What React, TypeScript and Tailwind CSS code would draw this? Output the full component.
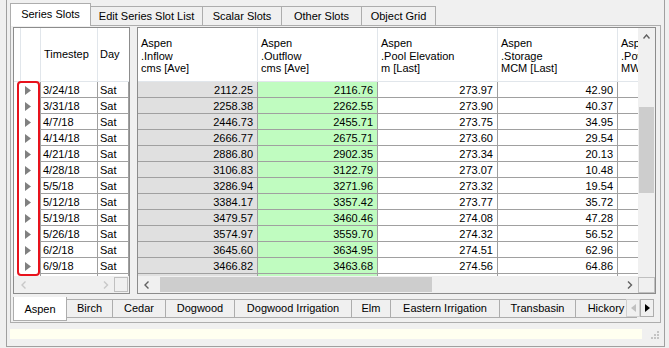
import React from "react";

const rows = [
  ["3/24/18", "2112.25", "2116.76", "273.97", "42.90"],
  ["3/31/18", "2258.38", "2262.55", "273.90", "40.37"],
  ["4/7/18", "2446.73", "2455.71", "273.75", "34.95"],
  ["4/14/18", "2666.77", "2675.71", "273.60", "29.54"],
  ["4/21/18", "2886.80", "2902.35", "273.34", "20.13"],
  ["4/28/18", "3106.83", "3122.79", "273.07", "10.48"],
  ["5/5/18", "3286.94", "3271.96", "273.32", "19.54"],
  ["5/12/18", "3384.17", "3357.42", "273.77", "35.72"],
  ["5/19/18", "3479.57", "3460.46", "274.08", "47.28"],
  ["5/26/18", "3574.97", "3559.70", "274.32", "56.52"],
  ["6/2/18", "3645.60", "3634.95", "274.51", "62.96"],
  ["6/9/18", "3466.82", "3463.68", "274.56", "64.86"],
  ["6/16/18", "3401.12", "3399.05", "274.60", "66.10"],
];

const headers = [
  [".Inflow", "cms [Ave]"],
  [".Outflow", "cms [Ave]"],
  [".Pool Elevation", "m [Last]"],
  [".Storage", "MCM [Last]"],
  [".Power", "MW [Ave]"],
];

const topTabs = [
  { label: "Series Slots", w: "w-[81px]" },
  { label: "Edit Series Slot List", w: "w-[112px]" },
  { label: "Scalar Slots", w: "w-[79px]" },
  { label: "Other Slots", w: "w-[80px]" },
  { label: "Object Grid", w: "w-[74px]" },
];

const bottomTabs = [
  { label: "Birch", w: "w-[46px]" },
  { label: "Cedar", w: "w-[53px]" },
  { label: "Dogwood", w: "w-[69px]" },
  { label: "Dogwood Irrigation", w: "w-[117px]" },
  { label: "Elm", w: "w-[39px]" },
  { label: "Eastern Irrigation", w: "w-[109px]" },
  { label: "Transbasin", w: "w-[76px]" },
  { label: "Hickory", w: "w-[61px]" },
];

function Chevron({ dir, color }: { dir: "left" | "right" | "up"; color: string }) {
  const d =
    dir === "left"
      ? "M4.5 0.5 L1 4 L4.5 7.5"
      : dir === "right"
      ? "M1 0.5 L4.5 4 L1 7.5"
      : "M0.5 4.5 L3.5 1 L6.5 4.5";
  return (
    <svg width={dir === "up" ? 7 : 6} height={dir === "up" ? 6 : 8} viewBox={dir === "up" ? "0 0 7 6" : "0 0 6 8"}>
      <path d={d} fill="none" stroke={color} strokeWidth="1.4" />
    </svg>
  );
}

export default function App() {
  return (
    <div className="relative h-[348px] w-[669px] overflow-hidden bg-[#f0f0f0] font-['Liberation_Sans',Arial,sans-serif] text-[11px] leading-[13px] text-black">
      <div className="ml-[6px] h-[347px] w-[659px] border-x border-b border-[#a0a0a0] pl-[3px] pt-[3px]">
        {/* top tabs */}
        <div className="flex h-[22px] items-end">
          {topTabs.map((tab, i) =>
            i === 0 ? (
              <div
                key={tab.label}
                className={`${tab.w} relative z-10 -mb-px flex h-[23px] items-center justify-center border-x border-t border-[#adadad] bg-white pb-[2px]`}
              >
                {tab.label}
              </div>
            ) : (
              <div
                key={tab.label}
                className={`${tab.w} flex h-[19px] items-center justify-center border-t border-r border-[#adadad] bg-[#f0f0f0]`}
              >
                {tab.label}
              </div>
            )
          )}
        </div>

        {/* tab page */}
        <div className="h-[298px] w-[651px] border border-[#adadad] bg-[#f0f0f0] pl-[2px] pt-[1px]">
          <div className="flex h-[267px]">
            {/* frozen left grid */}
            <div className="flex w-[117px] flex-col border border-[#8c8c8c] bg-white">
              <div className="flex h-[54px] border-b border-[#e1e6eb]">
                <div className="w-[7px] border-r border-[#e1e6eb]" />
                <div className="w-[20px] border-r border-[#e1e6eb]" />
                <div className="flex w-[57px] items-center border-r border-[#e1e6eb] pl-[3px]">Timestep</div>
                <div className="flex w-[31px] items-center pl-[2px]">Day</div>
              </div>
              <div className="h-[194px] overflow-hidden">
                {rows.map((r) => (
                  <div key={r[0]} className="flex h-[16px]">
                    <div className="flex w-[27px] items-center justify-center border-r border-[#a0a0a0] pl-[2px]">
                      <svg width="6" height="9" viewBox="0 0 6 9">
                        <polygon points="0,0 6,4.5 0,9" fill="#808080" />
                      </svg>
                    </div>
                    <div className="w-[57px] border-r border-b border-[#a0a0a0] pl-[2px] leading-[17px]">{r[0]}</div>
                    <div className="w-[31px] border-r border-b border-[#a0a0a0] pl-[2px] leading-[17px]">Sat</div>
                  </div>
                ))}
              </div>
              <div className="flex h-[17px] items-center bg-[#f0f0f0]">
                <div className="flex w-[17px] justify-center pl-[2px]">
                  <Chevron dir="left" color="#c8c8c8" />
                </div>
                <div className="flex-1" />
                <div className="flex w-[17px] justify-center">
                  <Chevron dir="right" color="#c8c8c8" />
                </div>
                <div className="mr-px h-[15px] w-[14px] border border-[#c0c0c0] bg-[#f0f0f0]" />
              </div>
            </div>

            {/* main grid */}
            <div className="ml-[7px] flex w-[519px] flex-col border border-[#8c8c8c] bg-white">
              <div className="flex h-[248px]">
                <div className="w-[500px] overflow-hidden">
                  <div className="flex h-[54px] border-b border-[#e1e6eb]">
                    {headers.map((h, i) => (
                      <div
                        key={h[0]}
                        className={`${i === 4 ? "w-[20px]" : "w-[120px] border-r border-[#e1e6eb]"} shrink-0 overflow-hidden whitespace-nowrap pl-[3px] pt-[9px] leading-[12.5px]`}
                      >
                        <div>Aspen</div>
                        <div>{h[0]}</div>
                        <div>{h[1]}</div>
                      </div>
                    ))}
                  </div>
                  <div className="h-[194px] overflow-hidden">
                    {rows.map((r) => (
                      <div key={r[0]} className="flex h-[16px] leading-[17px]">
                        <div className="w-[120px] shrink-0 border-r border-b border-[#a0a0a0] bg-[#e0e0e0] pr-[4px] text-right">{r[1]}</div>
                        <div className="w-[120px] shrink-0 border-r border-b border-[#a0a0a0] bg-[#c0fcc0] pr-[4px] text-right">{r[2]}</div>
                        <div className="w-[120px] shrink-0 border-r border-b border-[#a0a0a0] pr-[4px] text-right">{r[3]}</div>
                        <div className="w-[120px] shrink-0 border-r border-b border-[#a0a0a0] pr-[4px] text-right">{r[4]}</div>
                        <div className="w-[20px] shrink-0 border-b border-[#a0a0a0]" />
                      </div>
                    ))}
                  </div>
                </div>
                {/* vertical scrollbar */}
                <div className="flex w-[17px] flex-col bg-[#f0f0f0]">
                  <div className="flex h-[17px] items-center justify-center">
                    <Chevron dir="up" color="#606060" />
                  </div>
                  <div className="h-[62px]" />
                  <div className="mx-px h-[86px] bg-[#cdcdcd]" />
                </div>
              </div>
              {/* horizontal scrollbar */}
              <div className="flex h-[17px] items-center bg-[#f0f0f0]">
                <div className="flex w-[17px] justify-center">
                  <Chevron dir="left" color="#606060" />
                </div>
                <div className="ml-[5px] h-[15px] w-[272px] bg-[#cdcdcd]" />
                <div className="flex-1" />
                <div className="flex w-[17px] justify-center">
                  <Chevron dir="right" color="#606060" />
                </div>
                <div className="h-[16px] w-[17px] border border-[#c0c0c0] bg-[#f0f0f0]" />
              </div>
            </div>
          </div>

          {/* bottom tabs */}
          <div className="mt-[3px] flex h-[24px] items-start">
            <div className="flex h-[24px] w-[54px] items-center justify-center border-x border-b border-[#adadad] bg-white pt-px">
              Aspen
            </div>
            {bottomTabs.map((tab) => (
              <div
                key={tab.label}
                className={`${tab.w} mt-[2px] flex h-[19px] shrink-0 items-center justify-center overflow-hidden whitespace-nowrap border-y border-r border-[#adadad] bg-[#f0f0f0]`}
              >
                {tab.label}
              </div>
            ))}
            <div className="relative -ml-[11px] mt-[2px] flex h-[18px] w-[14px] items-center justify-center border border-[#d0d0d0] bg-[#f0f0f0]">
              <svg width="5" height="8" viewBox="0 0 5 8">
                <polygon points="5,0 0,4 5,8" fill="#c0c0c0" />
              </svg>
            </div>
            <div className="mt-[2px] flex h-[18px] w-[14px] items-center justify-center border border-[#adadad] bg-[#f0f0f0]">
              <svg width="5" height="8" viewBox="0 0 5 8">
                <polygon points="0,0 5,4 0,8" fill="#000" />
              </svg>
            </div>
          </div>
        </div>

        {/* status bar */}
        <div className="mt-[6px] flex items-end">
          <div className="h-[10px] w-[632px] bg-[#fffff0]" />
          <svg className="ml-[8px]" width="9" height="9" viewBox="0 0 9 9">
            <rect x="7" y="1" width="2" height="2" fill="#c4c4c4" />
            <rect x="4" y="4" width="2" height="2" fill="#c4c4c4" />
            <rect x="7" y="4" width="2" height="2" fill="#c4c4c4" />
            <rect x="1" y="7" width="2" height="2" fill="#c4c4c4" />
            <rect x="4" y="7" width="2" height="2" fill="#c4c4c4" />
            <rect x="7" y="7" width="2" height="2" fill="#c4c4c4" />
          </svg>
        </div>
      </div>

      {/* red highlight around the row arrows */}
      <div className="absolute left-[17px] top-[81px] h-[195px] w-[23px] rounded-[4px] border-2 border-[#e8121c]" />
    </div>
  );
}
